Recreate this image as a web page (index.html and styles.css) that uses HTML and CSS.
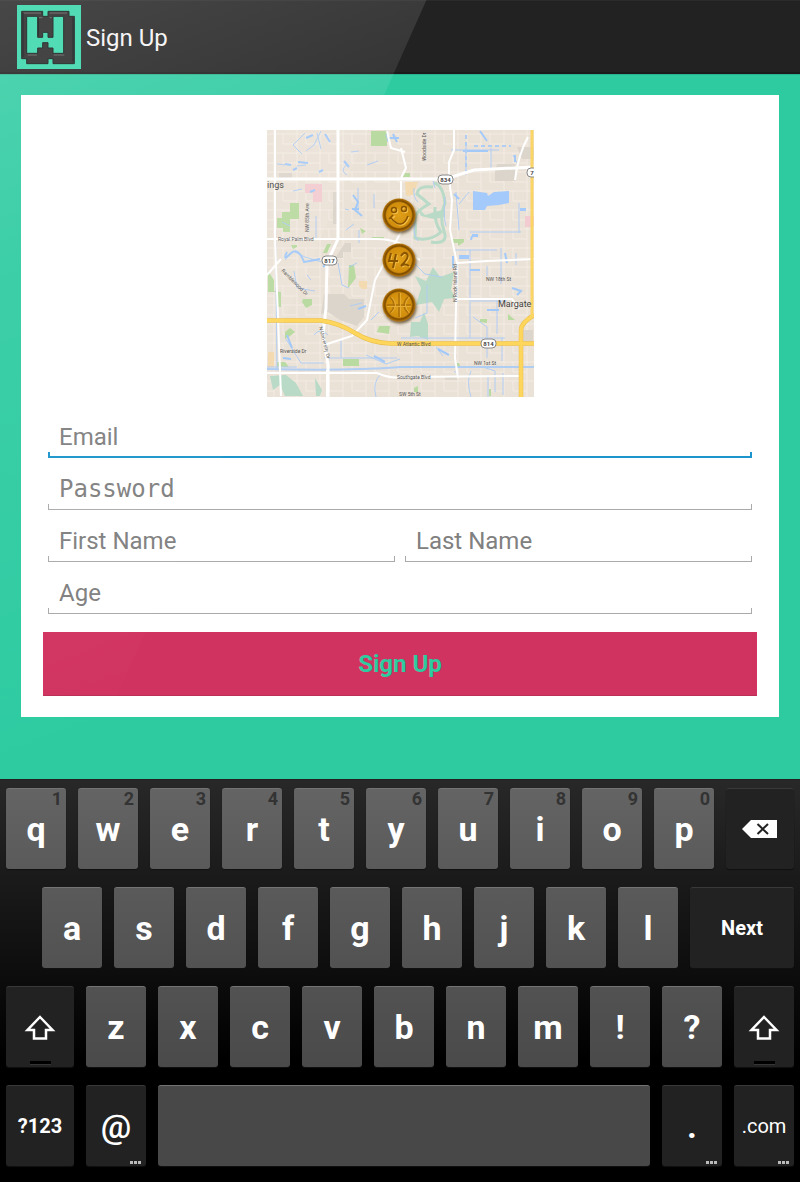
FILE: index.html
```html
<!DOCTYPE html>
<html lang="en">
<head>
<meta charset="utf-8">
<meta name="viewport" content="width=device-width, initial-scale=1">
<title>Sign Up</title>
<link rel="stylesheet" href="styles.css">
</head>
<body>
<div class="app">
  <header class="bar">
    <svg class="logo" viewBox="0 0 192 192" aria-hidden="true">
      <defs><filter id="soft"><feGaussianBlur stdDeviation="2"/></filter></defs>
      <rect width="192" height="192" fill="#52dcb5"/>
      <path fill="#444" fill-rule="evenodd" stroke="#2f3634" stroke-width="3" d="M14 19H77V34H93V19H156V34H172V176H108V161H93V176H29V161H14ZM29 34V145H62V129H77V113H93V129H108V145H140V34H108V97H93V82H77V97H62V34Z"/>
      <path fill="none" stroke="#777" stroke-width="3" filter="url(#soft)" d="M32 150H60M110 150H142M66 38H76M98 38H104M20 24H72M98 24H150"/>
      <path fill="none" stroke="#2d3130" stroke-width="3" filter="url(#soft)" d="M18 24V156M64 38V92M168 38V170"/>
    </svg>
    <h1 class="title">Sign Up</h1>
  </header>
  <main class="main">
    <form class="card">
      <svg class="map" viewBox="0 0 267 267" role="img" aria-label="Map">
        <defs>
          <radialGradient id="gold"><stop offset="0" stop-color="#e0a01a"/><stop offset=".75" stop-color="#d18d0b"/><stop offset=".85" stop-color="#7c4a00"/><stop offset="1" stop-color="#b9780b"/></radialGradient>
          <filter id="shade" x="-20%" y="-20%" width="150%" height="150%"><feDropShadow dx="1" dy="2" stdDeviation="1.5" flood-color="#443311" flood-opacity=".75"/></filter>
          <filter id="haze" x="0" y="0" width="100%" height="100%"><feGaussianBlur stdDeviation=".5"/></filter>
          <pattern id="streets" width="23" height="19" patternUnits="userSpaceOnUse"><path d="M0 4H23M7 0V19M16 4V14H23M0 14H7" fill="none" stroke="#f3ece4" stroke-width="1"/></pattern>
        </defs>
        <rect width="267" height="267" fill="#ebe2d7"/>
        <rect width="267" height="267" fill="url(#streets)"/>
        <g filter="url(#haze)">
        <g fill="#dcd5cc"><path d="M66 62h5v32h-5zM12 43h13v5H12zM230 34h18v17h-20v-9zM250 17h17v12h-12zM57 164h20l5 5h15v18l-7 9-17-6-12-8-7 2zM78 113h6v9h-8v6h-8zM178 246h12v4h-12zM256 200h10v12h-12z"/></g>
        <g fill="#f2ccd0"><path d="M38 54h17v18h-9v-9h-8zM258 86h9v11h-9z"/></g>
        <g fill="#f3dab0"><path d="M138 52h13l-5 13-7 1zM92 151h8v8h-5l-3-3zM1 222h6v15H1z"/></g>
        <g fill="#b9daa0"><path d="M104 1h16v15h-16zM23 73h9v16h-9v13h-7v-4h-6v-10h5v-6h8zM60 114h4l-4 9h-4zM93 98l6 3-4 3zM105 107h12v2h-12zM82 135h5l2 13-8 10zM1 141l6 9v11l7 1v15H9v-15H1zM36 169h9v6l-6 3-4-6zM23 198l5 4-5 4-5 3v-7zM76 229h16v7H76zM10 232h8l4 5H10zM112 196h11l-1 8-12-2zM24 115h6v2l-4 2zM138 43h5v4h-7zM186 109h11v3l-6 4v-3h-5zM213 189h7v4l-7-1zM241 184l7 6h-7zM188 233h4l1 3h-5zM147 258l4-2v6h-4zM222 259h2v7h-2z"/></g>
        <g fill="#b9dac6"><path d="M150 77l8 8 20-6v8l-11 2-13-3zM149 175l5-17-6-12 11 5 7-14 7 10 14-5-3 18 4 8-11 1-5 13-7-10zM144 192h9l4-10 4 12v16l-10-4-8 1zM3 246l16-1 10 8 7 13H18l-5-11-7 5zM48 248l7 12-2 6h-4z"/></g>
        <g fill="none" stroke="#b9dac6" stroke-width="3"><path d="M166 57q-15-2-16 7l12 10q-15 8-14 16t0 18q15 4 26-6-7-9-6-25"/><path d="M167 53q9 2 11 20-6 14-1 28t-13 11"/></g>
        <g fill="none" stroke="#b0cdf3" stroke-width="1"><path d="M147 58q-1 10 4 14M166 51l2 7M149 93q-5 9 2 18M178 67q-2 20 1 29M8 47L10 240M38 3L26 15 35 24M54 1L47 15 39 21M10 34l8 1M30 36l9-1M50 3l4 16M80 35q-8 5 0 10M84 22l8-1M100 35l11-4M119 4l2 8M15 92l8 4M26 61l9-2M78 79l4 1M49 86v24M91 58v24M107 64v14M79 100l8-6M92 100v13M18 130l8-9 12 6 17 5M40 145l4 5M27 141l3 17 18 3M71 133l4 22 7 3M82 137l8-4M83 176l12-3M104 190l8-8M74 211v16M19 209l15 24h23M57 228H130M99 225l20 9 14-5M47 205q6-8 14 0M114 244q-9 8-5 23M0 237H30"/><path d="M184 20h48M199 15v30M224 18v22M246 25l4 8M189 62l3 38M202 62l-10 12M203 102h51M203 120V208M187 120H230M220 136v10M234 118v36M249 123v12M252 103v-30M204 171H240M206 187l14 10v31M230 169v35M238 208H134M235 231v-24M216 237l12 4v21M204 241q-5 10 0 26M147 133l11 11 17 3M160 155v28l-12 5M169 217l7 9M187 241l5 4M221 245v22M236 243v22"/></g>
        <g fill="none" stroke="#a3c9f8" stroke-width="2"><path d="M39 8l7-3M58 4l5 8M31 32l10 1M52 42l4-2M77 31l5 6M18 34l6 1M26 40l4-2M122 8h10M126 4l4 8M86 65l5 7-3 8 7 6M85 79h7M43 62l5-2M20 122q-5 10 3 2t14 8l16-3M64 129l-8 8M20 205l5 13M16 228l8 1M91 179l8-3M107 226l11 6M196 21h25M213 1l7 10M248 25v7M187 64l5 5M205 106l-1 4M220 180h12M245 158l9 3-4 4M171 219l11 6M186 126v12M203 140h10M238 123l2 10"/></g>
        <g fill="#a3cafa"><path d="M206 61l14 2 1 3 6-4 15-1v12l-10 2-12 1-2 4h-12zM253 78h6v3h-6zM192 125h10v4h-10zM205 104h6v3h-6z"/></g>
        <g stroke="#b0cdf3" stroke-width="2" fill="none"><path d="M0 239Q80 241 134 237H267"/><path d="M199 5v42M207 16h37" stroke-dasharray="4 3"/></g>
        <g fill="none" stroke="#fff"><path stroke-width="2" d="M8 0V109L14 266M0 109H109q15 0 25 5M134 51V102L108 150 100 190 85 206 57 215M187 0V20l-5 12V50l3 20-2 30 7 33-1 45-1 50 3 20M134 120l19 10M190 133l30-2 47-2M134 18l5 20-5 10M248 50q3-25 13-43M0 145l14-16M120 1l4 17 14 4M56 243H110q14 6 24 4L253 246M189 169H245l7 10M60 240v27M0 243H60"/><path stroke-width="3" d="M71 0V109L60 133 59 178 56 205 61 235V267M0 49H134 178l29-9 60-3"/></g>
        <g fill="none"><path stroke="#e8bd4b" stroke-width="4.5" d="M0 190.500H54Q72 193 88 203T124 213.500H267M254 267V200q0-7 13-15"/><path stroke="#ffd65b" stroke-width="3.500" d="M0 190.500H54Q72 193 88 203T124 213.500H267M254 267V200q0-7 13-15"/><path stroke="#fbd566" stroke-width="3" d="M265 0V187"/></g>
        </g>
        <g class="map-text"><text class="map-city" x="0" y="58">ings</text><text class="map-city" x="231" y="177">Margate</text><text x="11" y="111">Royal Palm Blvd</text><text x="13" y="223">Riverside Dr</text><text x="130" y="216">W Atlantic Blvd</text><text x="130" y="249">Southgate Blvd</text><text x="132" y="266">SW 5th St</text><text x="219" y="151">NW 18th St</text><text x="207" y="235">NW 1st St</text><text transform="translate(42 102) rotate(-90)">NW 85th Ave</text><text transform="translate(159 31) rotate(-90)">Woodside Dr</text><text transform="translate(190 172) rotate(-90)">N Rock Island Rd</text><text transform="translate(14 141) rotate(45)">Ramblewood Dr</text><text transform="translate(52 197) rotate(76)">N University Dr</text></g>
        <g fill="#fff" stroke="#888" stroke-width="1"><rect x="171" y="45" width="15" height="9" rx="4"/><rect x="55" y="126" width="15" height="9" rx="4"/><rect x="214" y="209" width="15" height="9" rx="4"/><rect x="260" y="38" width="15" height="9" rx="4"/></g>
        <g class="map-route"><text x="178.500" y="52">834</text><text x="62.500" y="133">817</text><text x="221.500" y="216">814</text><text x="265" y="45">7</text></g>
        <g filter="url(#shade)" fill="url(#gold)"><circle cx="132" cy="85" r="16.500"/><circle cx="132" cy="130" r="16.500"/><circle cx="132" cy="175" r="16.500"/></g>
        <g fill="none" stroke="#f5c04a" stroke-width="1.500" transform="translate(1 1)"><circle cx="127" cy="80" r="2.500"/><circle cx="137" cy="79" r="2.500"/><path d="M124 88q11 13 17-2M127 85l-4 4M124 123l-2 8h9M129 124l-3 14M134 126q3-5 6-2t-6 12q4-3 8 0"/></g>
        <g fill="none" stroke="#8a5500" stroke-width="1.500"><circle cx="127" cy="80" r="2.500"/><circle cx="137" cy="79" r="2.500"/><path d="M124 88q11 13 17-2M126 85l-4 4"/><path stroke-width="2" d="M124 123l-2 8h9M129 124l-3 14M134 126q3-5 6-2t-6 12q4-3 8 0"/></g>
        <g fill="none" stroke="#ad720b" stroke-width="1.500"><path d="M132 163v24M120 175h24M123 167q8 8 0 16M141 167q-8 8 0 16"/><path stroke="#e6ad35" stroke-width="1" d="M133.500 163v24M120 176.500h24M124.500 167q8 8 0 16M142.500 167q-8 8 0 16"/></g>
      </svg>
      <input class="field field-active" type="email" placeholder="Email" aria-label="Email">
      <input class="field field-mono" type="password" placeholder="Password" aria-label="Password">
      <div class="pair">
        <input class="field" type="text" placeholder="First Name" aria-label="First Name">
        <input class="field" type="text" placeholder="Last Name" aria-label="Last Name">
      </div>
      <input class="field" type="text" inputmode="numeric" placeholder="Age" aria-label="Age">
      <button class="submit" type="button">Sign Up</button>
    </form>
  </main>
</div>
<section class="keyboard" aria-label="Keyboard">
  <div class="row">
    <button class="key">q<span class="hint">1</span></button><button class="key">w<span class="hint">2</span></button><button class="key">e<span class="hint">3</span></button><button class="key">r<span class="hint">4</span></button><button class="key">t<span class="hint">5</span></button><button class="key">y<span class="hint">6</span></button><button class="key">u<span class="hint">7</span></button><button class="key">i<span class="hint">8</span></button><button class="key">o<span class="hint">9</span></button><button class="key">p<span class="hint">0</span></button>
    <button class="key dark wide" aria-label="Delete"><svg class="icon-delete" viewBox="0 0 36 18"><path fill="#fff" d="M0 9L9 0H35V18H9Z"/><path d="M15.500 4L26 14M26 4L15.500 14" stroke="#222" stroke-width="2"/></svg></button>
  </div>
  <div class="row row-inset">
    <button class="key">a</button><button class="key">s</button><button class="key">d</button><button class="key">f</button><button class="key">g</button><button class="key">h</button><button class="key">j</button><button class="key">k</button><button class="key">l</button><button class="key dark next">Next</button>
  </div>
  <div class="row">
    <button class="key dark wide" aria-label="Shift"><svg class="icon-shift" viewBox="0 0 32 25"><path d="M16 2L28.500 15H22V23.500H10V15H3.500Z" fill="none" stroke="#fff" stroke-width="2.500"/></svg><span class="lock"></span></button>
    <button class="key">z</button><button class="key">x</button><button class="key">c</button><button class="key">v</button><button class="key">b</button><button class="key">n</button><button class="key">m</button><button class="key">!</button><button class="key">?</button>
    <button class="key dark" aria-label="Shift"><svg class="icon-shift" viewBox="0 0 32 25"><path d="M16 2L28.500 15H22V23.500H10V15H3.500Z" fill="none" stroke="#fff" stroke-width="2.500"/></svg><span class="lock"></span></button>
  </div>
  <div class="row">
    <button class="key dark wide label">?123</button>
    <button class="key dark at">@<span class="more"></span></button>
    <button class="key space" aria-label="Space"></button>
    <button class="key dark">.<span class="more"></span></button>
    <button class="key dark com">.com<span class="more"></span></button>
  </div>
</section>
</body>
</html>
```
FILE: styles.css
```css
* { box-sizing: border-box; }
body {
  margin: 0;
  background: #000;
  font-family: Roboto, "Noto Sans", sans-serif;
}
button, input { font-family: inherit; }

.app { position: relative; background: #2ecba1; }
.app::after {
  content: "";
  position: absolute;
  inset: 0;
  pointer-events: none;
  background: linear-gradient(160deg, rgba(255,255,255,.17), rgba(255,255,255,.07) 25%, rgba(255,255,255,0) 72%);
  clip-path: polygon(0 0, 53.3% 0, 10% 100%, 0 100%);
}
.bar {
  display: flex;
  align-items: center;
  gap: 5px;
  height: 74px;
  padding: 1px 17px 0;
  background: #222;
  border-top: 1px solid #2a2a2a;
  border-bottom: 2px solid #1b1b1b;
  box-shadow: 0 1px 0 #28b28d;
}
.logo { position: relative; z-index: 1; width: 64px; height: 64px; }
.title { margin: 0; padding-top: 2px; color: #f3f3f3; font-size: 24px; font-weight: 400; line-height: 28px; }

.main { padding: 21px 21px 62px; }
.card {
  display: flex;
  flex-direction: column;
  padding: 35px 22px 21px;
  background: #fff;
}
.map { align-self: center; width: 267px; height: 267px; margin-bottom: 9px; }
.map-text { font-family: Roboto, sans-serif; font-size: 5px; fill: #555; }
.map-city { font-size: 9px; fill: #444; }
.map-route { font-family: Roboto, sans-serif; font-size: 6px; font-weight: 700; fill: #444; text-anchor: middle; }

.field {
  --line: #aaa;
  --size: 1px;
  flex: 1 1 0;
  min-width: 0;
  min-height: 52px;
  margin: 0 5px;
  padding: 9px 11px 0;
  border: 0;
  outline: 0;
  color: #222;
  font-size: 24px;
  background:
    linear-gradient(var(--line), var(--line)) left bottom / var(--size) 6px no-repeat,
    linear-gradient(var(--line), var(--line)) right bottom / var(--size) 6px no-repeat,
    linear-gradient(var(--line), var(--line)) left bottom / 100% var(--size) no-repeat;
}
.field::placeholder { color: #808080; opacity: 1; }
.field-active { --line: #1b95cb; --size: 2px; }
.field-mono { font-family: "DejaVu Sans Mono", monospace; }
.pair { display: flex; }
.submit {
  height: 64px;
  margin-top: 18px;
  border: 0;
  border-bottom: 1px solid #b92f57;
  color: #2ecba1;
  background: #d13360;
  font-size: 24px;
  font-weight: 700;
}

.keyboard {
  display: flex;
  flex-direction: column;
  gap: 18px;
  padding: 8px 6px 16px;
  border-top: 1px solid #222;
  background: linear-gradient(#282828, #0d0d0d 48%, #000 70%);
}
.row { display: flex; gap: 12px; }
.row-inset { padding-left: 36px; }
.key {
  position: relative;
  display: flex;
  align-items: center;
  justify-content: center;
  flex: 60 1 0;
  min-width: 0;
  height: 81px;
  padding: 0;
  border: 0;
  border-top: 1px solid #747474;
  border-radius: 3px;
  color: #fff;
  background: linear-gradient(#646464, #5a5a5a);
  box-shadow: 0 1px 1px #111;
  font-size: 34px;
  font-weight: 700;
}
.row:nth-child(2) .key { background: linear-gradient(#5a5a5a, #525252); }
.row:nth-child(3) .key { background: linear-gradient(#525252, #4a4a4a); }
.row:nth-child(4) .key { background: #484848; }
.row .key.dark { background: #222; border-top-color: #393939; }
.wide { flex-grow: 68; }
.next { flex-grow: 104; font-size: 20px; }
.label { font-size: 20px; }
.space { flex-grow: 492; }
.at { font-weight: 500; }
.com { font-size: 20px; font-weight: 400; }
.hint { position: absolute; top: 0; right: 4px; color: #333; font-size: 18px; line-height: 20px; }
.lock { position: absolute; bottom: 2px; width: 21px; height: 4px; background: #000; border-bottom: 1px solid #353535; }
.more { position: absolute; right: 5px; bottom: 2px; width: 11px; height: 3px; background: repeating-linear-gradient(90deg, #bbb 0 3px, transparent 3px 4px); }
.icon-delete { width: 36px; height: 18px; }
.icon-shift { width: 32px; height: 25px; }
```
